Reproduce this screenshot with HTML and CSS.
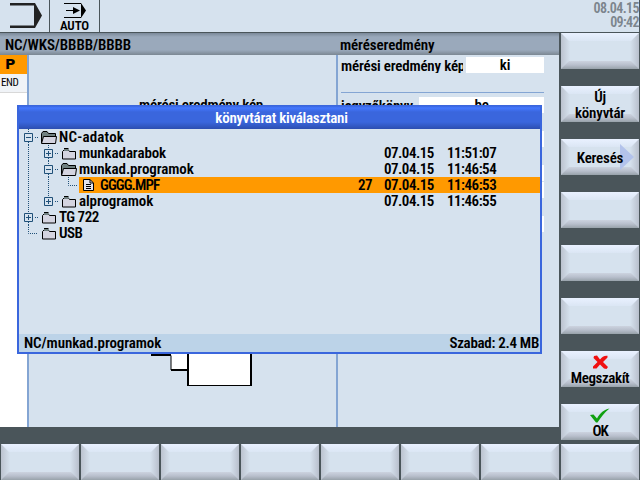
FILE: index.html
```html
<!DOCTYPE html>
<html lang="hu">
<head>
  <meta charset="UTF-8">
  <meta name="viewport" content="width=device-width, initial-scale=1.0">
  <title>könyvtárat kiválasztani</title>
  <link rel="stylesheet" href="styles.css">
</head>
<body>

  <!-- Shared icons -->
  <svg class="defs" width="0" height="0">
    <symbol id="minus" viewBox="0 0 9 9">
      <path d="M.5 .5H8.5V8.5H.5ZM2 4.5H7" fill="none" stroke="#205078"/>
    </symbol>
    <symbol id="plus" viewBox="0 0 9 9">
      <path d="M.5 .5H8.5V8.5H.5ZM2 4.5H7M4.5 2V7" fill="none" stroke="#205078"/>
    </symbol>
    <symbol id="folder" viewBox="0 0 14 12">
      <path d="M.5 3.5L2.5 1.5H6L7.5 3.5H13.5V11H.5Z" fill="#d4d4e0" stroke="#000"/>
      <path d="M2 2H6.5" stroke="#708080" stroke-width="2"/>
      <path d="M2 .5H6.5" stroke="#000"/>
    </symbol>
    <symbol id="open" viewBox="0 0 16 13">
      <path d="M.5 12V2.5L2 .5H6L7.5 2.5H14.5V5" fill="#708080" stroke="#000"/>
      <path d="M.5 12.5L2.5 5.5H15.5L14.5 12.5Z" fill="#d4d4e0" stroke="#000"/>
    </symbol>
    <symbol id="file" viewBox="0 0 11 12">
      <path d="M.5 .5H7L10.5 4V11.5H.5Z" fill="#e4e4ee" stroke="#000"/>
      <path d="M7 .5V4H10M3 5.5H8M3 7.5H8M3 9.5H8" fill="none" stroke="#000"/>
    </symbol>
  </svg>

  <div class="screen">
    <div class="topbar">
      <div class="mode">
        <svg width="34" height="28" viewBox="0 0 34 28">
          <path d="M1 1H26L33 13.5L26 26H1V23.5H25V3.5H1Z" fill="#222"/>
        </svg>
      </div>
      <div class="mode auto">
        <svg width="24" height="17" viewBox="0 0 24 17">
          <path d="M1 1.5H18M1 15.5H18M3 8.5H11" stroke="#000" fill="none"/>
          <path d="M10 5L17 8.5L10 12ZM18 1L23 8.5L18 16Z" fill="#000"/>
        </svg>
        <span>AUTO</span>
      </div>
      <div class="clock">08.04.15<br>09:42</div>
    </div>

    <div class="middle">
      <div class="main">
        <div class="titlebar">
          <span class="path">NC/WKS/BBBB/BBBB</span>
          <span class="section">méréseredmény</span>
        </div>
        <div class="content">
          <div class="program">
            <div class="p-row">P</div>
            <div class="end-row">END</div>
          </div>
          <div class="drawing">
            <div class="caption">mérési eredmény kép</div>
            <svg width="120" height="67" viewBox="0 0 120 67">
              <path d="M1 0V35.5H20V50H38V0Z" fill="#fff" stroke="#000"/>
              <path d="M20 50H38M0 35H20" stroke="#000" stroke-width="2"/>
              <path d="M37 0H100V65.5H37Z" fill="#fff"/>
              <path d="M37 0V66M100 0V66" stroke="#000" stroke-width="2"/>
              <path d="M36 65.5H101" stroke="#000"/>
            </svg>
          </div>
          <div class="settings">
            <div class="field">
              <label class="wide">mérési eredmény kép</label>
              <div class="value">ki</div>
            </div>
            <div class="field second">
              <label>jegyzőkönyv</label>
              <div class="value">be</div>
            </div>
            <div class="field third"><div class="value"></div></div>
            <div class="field fourth"><div class="value"></div></div>
            <div class="field fifth"><div class="value"></div></div>
            <div class="field fourth"><div class="value"></div></div>
          </div>
        </div>
      </div>

      <div class="softkeys">
        <div class="key"></div>
        <div class="key"><span>Új<br>könyvtár</span></div>
        <div class="key">
          <svg class="arrow" width="14" height="26" viewBox="0 0 14 26"><path d="M0 0L14 13L0 26Z" fill="#b3c3eb"/></svg>
          <span>Keresés</span>
        </div>
        <div class="key"></div>
        <div class="key"></div>
        <div class="key"></div>
        <div class="key icon-key">
          <svg width="17" height="15" viewBox="0 0 17 15">
            <path d="M2 1L5 0.5L8 4.5C10 2 12 .5 15.5 .8L15.5 2.5L11 7L16 12L14.5 14L12 13.5L8 9.5L4.500 13.5L1 13.5L1 11.5L5.5 7L1.5 3Z" fill="#f01010"/>
          </svg>
          <span class="cancel">Megszakít</span>
        </div>
        <div class="key icon-key">
          <svg width="22" height="15" viewBox="0 0 22 15">
            <path d="M1 7L4.5 6.5L8 10.5C11 5 15 1.5 20.5 .5C15 5 12 9 8.5 14.5L7 14.5Z" fill="#10a010"/>
          </svg>
          <span class="ok">OK</span>
        </div>
      </div>
    </div>

    <div class="bottomkeys">
      <div class="key"></div>
      <div class="key"></div>
      <div class="key"></div>
      <div class="key"></div>
      <div class="key"></div>
      <div class="key"></div>
      <div class="key"></div>
      <div class="key"></div>
    </div>

    <!-- Directory dialog -->
    <div class="dialog">
      <div class="dialog-title">könyvtárat kiválasztani</div>
      <div class="tree">
        <div class="row">
          <svg width="40" height="16">
            <path class="dots" d="M9.5 0V4M9.5 13V16M16 8.5H19"/>
            <use href="#minus" x="5" y="4" width="9" height="9"/>
            <use href="#open" x="22" y="2" width="16" height="13"/>
          </svg>
          <span class="name nc">NC-adatok</span>
        </div>
        <div class="row">
          <svg width="60" height="16">
            <path class="dots" d="M9.5 0V16M29.5 0V4M29.5 13V16M36 8.5H39"/>
            <use href="#plus" x="25" y="4" width="9" height="9"/>
            <use href="#folder" x="43" y="3" width="14" height="12"/>
          </svg>
          <span class="name">munkadarabok</span>
          <span class="date">07.04.15</span>
          <span class="time">11:51:07</span>
        </div>
        <div class="row">
          <svg width="60" height="16">
            <path class="dots" d="M9.5 0V16M29.5 0V4M29.5 13V16M36 8.5H39"/>
            <use href="#minus" x="25" y="4" width="9" height="9"/>
            <use href="#open" x="42" y="2" width="16" height="13"/>
          </svg>
          <span class="name">munkad.programok</span>
          <span class="date">07.04.15</span>
          <span class="time">11:46:54</span>
        </div>
        <div class="row">
          <svg width="60" height="16">
            <path class="dots" d="M9.5 0V16M29.5 0V16M49.5 0V8.5H58"/>
          </svg>
          <div class="selected">
            <svg width="11" height="12"><use href="#file" width="11" height="12"/></svg>
            <span class="name file">GGGG.MPF</span>
            <span class="size">27</span>
            <span class="date">07.04.15</span>
            <span class="time">11:46:53</span>
          </div>
        </div>
        <div class="row">
          <svg width="60" height="16">
            <path class="dots" d="M9.5 0V16M29.5 0V4M36 8.5H39"/>
            <use href="#plus" x="25" y="4" width="9" height="9"/>
            <use href="#folder" x="43" y="3" width="14" height="12"/>
          </svg>
          <span class="name">alprogramok</span>
          <span class="date">07.04.15</span>
          <span class="time">11:46:55</span>
        </div>
        <div class="row">
          <svg width="40" height="16">
            <path class="dots" d="M9.5 0V4M9.5 13V16M16 8.5H19"/>
            <use href="#plus" x="5" y="4" width="9" height="9"/>
            <use href="#folder" x="23" y="3" width="14" height="12"/>
          </svg>
          <span class="name drive">TG 722</span>
        </div>
        <div class="row">
          <svg width="40" height="16">
            <path class="dots" d="M9.5 0V8.5H19"/>
            <use href="#folder" x="23" y="3" width="14" height="12"/>
          </svg>
          <span class="name drive">USB</span>
        </div>
      </div>
      <div class="dialog-footer">
        <span>NC/munkad.programok</span>
        <span class="free">Szabad: 2.4 MB</span>
      </div>
    </div>
  </div>

</body>
</html>
```
FILE: styles.css
```css
* {
  margin: 0;
  padding: 0;
  box-sizing: border-box;
}

body {
  width: 640px;
  height: 480px;
  overflow: hidden;
  font-family: "Roboto Condensed", "Liberation Sans Narrow", "Liberation Sans", sans-serif;
  font-size: 15px;
  font-weight: 600;
  line-height: 16px;
  letter-spacing: -0.1px;
  color: #000;
  white-space: nowrap;
}

svg {
  display: block;
  flex: none;
}

.defs {
  position: absolute;
}

.screen {
  position: relative;
  display: flex;
  flex-direction: column;
  width: 640px;
  height: 480px;
  background: #4a555a;
}

.topbar {
  display: flex;
  width: 639px;
  height: 32px;
  margin-bottom: 1px;
  background: #d6e2ee;
}

.mode {
  width: 50px;
  padding: 2px 0 0 9px;
  border-right: 1px solid #4a555a;
}

.auto {
  display: flex;
  flex-direction: column;
  align-items: center;
  padding: 2px 0 0;
  font-size: 13px;
  line-height: 13px;
}

.clock {
  margin-left: auto;
  padding: 1px 0 0;
  color: #7c858d;
  font-size: 14px;
  line-height: 14px;
  letter-spacing: -0.6px;
  text-align: right;
}

.middle {
  display: flex;
  height: 411px;
}

.main {
  width: 559px;
  height: 394px;
}

.titlebar {
  display: flex;
  height: 22px;
  padding: 4px 0 0 5px;
  background: linear-gradient(#7b8999 0, #9aa9bb 4px, #9aa9bb 17px, #7b8792 22px);
}

.path {
  width: 335px;
}

.content {
  display: flex;
  height: 372px;
  background: #d6e2ee;
}

.program {
  width: 29px;
  border-right: 2px solid #84a5d3;
  background: #fff;
}

.p-row {
  height: 19px;
  padding: 1px 0 0 5px;
  background: #f90;
  font-family: "DejaVu Sans", sans-serif;
  font-size: 14px;
}

.end-row {
  height: 19px;
  padding: 1px 0 0 1px;
  background: #f0f3f7;
  border-bottom: 1px solid #d8d8d8;
  font-size: 11px;
  font-weight: normal;
  letter-spacing: -0.4px;
}

.drawing {
  display: flex;
  flex-direction: column;
  justify-content: space-between;
  width: 307px;
  height: 332px;
  padding-left: 110px;
}

.drawing svg {
  margin-left: 12px;
}

.caption {
  padding-top: 42px;
  letter-spacing: -0.2px;
}

.settings {
  width: 223px;
  padding: 2px 0 0 3px;
  border-left: 2px solid #84a5d3;
}

.field {
  display: flex;
  height: 16px;
  width: 203px;
  letter-spacing: -0.2px;
}

.field label {
  width: 78px;
  overflow: hidden;
}

.field label.wide {
  width: 122px;
  margin-right: 3px;
  line-height: 18px;
}

.value {
  flex: 1;
  background: #fff;
  line-height: 17px;
  text-align: center;
}

.second {
  margin-top: 24px;
  box-shadow: 0 -4px #d6e2ee, 0 -5px #84a5d3;
}

.second label {
  line-height: 18px;
}

.third,
.fourth {
  margin-top: 18px;
}

.fifth {
  margin-top: 1px;
}

/* Softkeys */
.softkeys {
  display: flex;
  flex-direction: column;
  gap: 17px;
  width: 80px;
  padding-left: 2px;
}

.bottomkeys {
  display: flex;
  gap: 2px;
  padding-left: 1px;
}

.key {
  position: relative;
  display: flex;
  flex-direction: column;
  align-items: center;
  justify-content: center;
  flex: none;
  width: 78px;
  height: 36px;
  padding-top: 1px;
  letter-spacing: -0.2px;
  text-align: center;
  background: linear-gradient(90deg, #bcc3cf, #d6e2ee 9px, #d6e2ee 69px, #b8bfcc);
}

.key::before,
.key::after {
  content: "";
  position: absolute;
  left: 0;
  right: 0;
  height: 8px;
}

.key::before {
  top: 0;
  background: linear-gradient(#e9f1ff, #dbe6f4);
  clip-path: polygon(0 0, 100% 0, calc(100% - 8px) 100%, 8px 100%);
}

.key::after {
  bottom: 0;
  background: linear-gradient(#ccd3df, #b8bfcc 50%, #98a2aa);
  clip-path: polygon(8px 0, calc(100% - 8px) 0, 100% 100%, 0 100%);
}

.key span,
.key svg {
  position: relative;
  z-index: 1;
}

.icon-key {
  padding-top: 3px;
}

.cancel {
  letter-spacing: -0.4px;
}

.ok {
  letter-spacing: -1.2px;
}

.key .arrow {
  position: absolute;
  left: 59px;
  top: 5px;
}

/* Dialog */
.dialog {
  position: absolute;
  left: 17px;
  top: 105px;
  display: flex;
  flex-direction: column;
  width: 525px;
  height: 249px;
  border: 2px solid #3a66dd;
  border-top: 0;
  background: #d6e2ee;
}

.dialog-title {
  height: 24px;
  padding: 5px 0 0 4px;
  background: linear-gradient(#3a66dd 0, #3a66dd 1px, #4478ff 3px, #3a66dd 7px, #3a66dd 17px, #2c4eb0 24px);
  color: #fff;
  letter-spacing: -0.25px;
  text-align: center;
}

.tree {
  flex: 1;
}

.row,
.selected {
  display: flex;
  align-items: center;
  height: 16px;
  line-height: 18px;
}

.dots {
  fill: none;
  stroke: #205078;
  stroke-dasharray: 1 1;
}

.name {
  flex: 1;
}

.nc {
  letter-spacing: 0.2px;
}

.drive {
  letter-spacing: -0.5px;
}

.selected {
  width: 461px;
  padding-left: 4px;
  background: #f90;
}

.file {
  padding-left: 6px;
  letter-spacing: -0.9px;
}

.size {
  margin-right: 12px;
  letter-spacing: -0.5px;
}

.date {
  width: 63px;
  letter-spacing: -0.5px;
}

.time {
  width: 93px;
  letter-spacing: -0.5px;
}

.dialog-footer {
  display: flex;
  justify-content: space-between;
  height: 18px;
  padding: 1px 1px 0 5px;
  background: #bcd3e8;
}

.free {
  letter-spacing: -0.3px;
}
```
